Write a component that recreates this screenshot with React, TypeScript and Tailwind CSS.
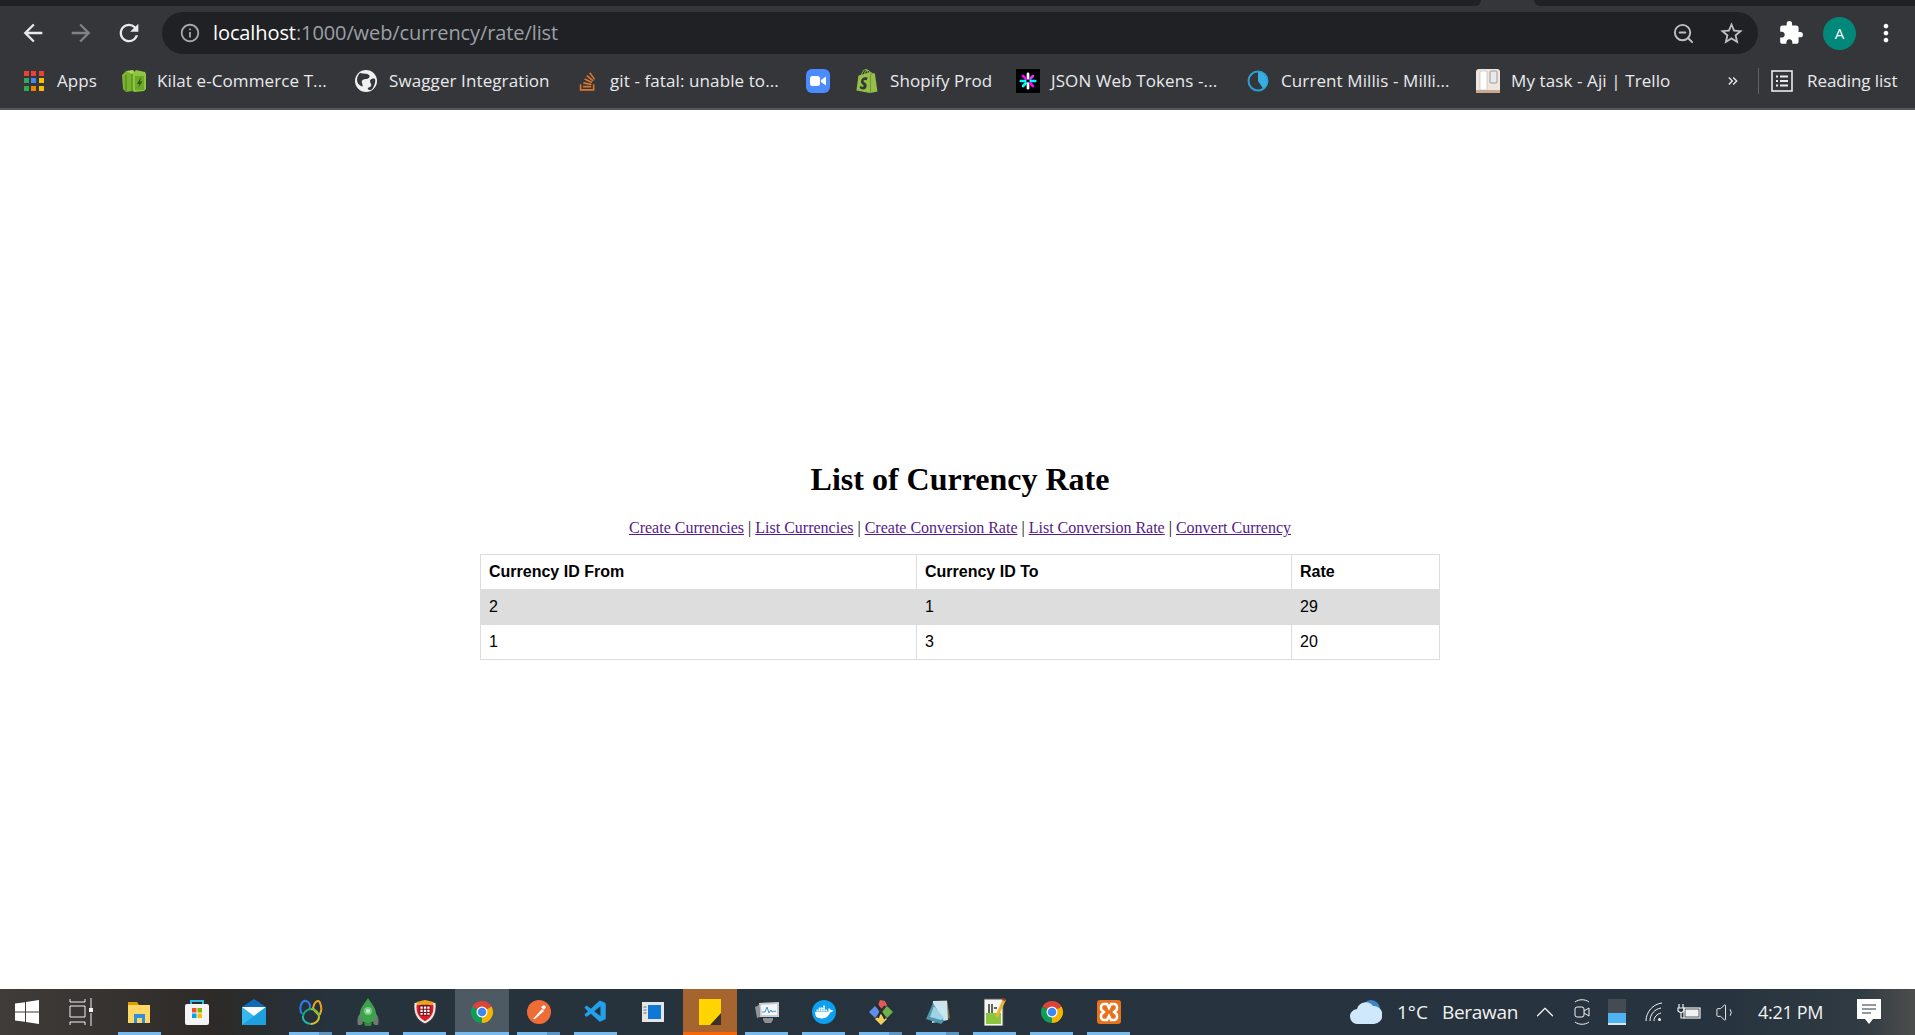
import type { ReactNode } from "react";
import {
  MdArrowBack,
  MdArrowForward,
  MdRefresh,
  MdInfoOutline,
  MdExtension,
  MdMoreVert,
  MdOutlineStarBorder,
  MdOutlineKeyboardDoubleArrowRight,
} from "react-icons/md";
import { LuZoomOut, LuChevronUp, LuVolume1 } from "react-icons/lu";
import { FaStackOverflow } from "react-icons/fa";
import { SiShopify, SiDocker } from "react-icons/si";
import { VscVscode } from "react-icons/vsc";

const AppsIcon = () => {
  const colors = ["#ea4335", "#ea4335", "#ea4335", "#34a853", "#4285f4", "#fbbc04", "#34a853", "#ea8600", "#fbbc04"];
  return (
    <div className="grid h-[20px] w-[20px] grid-cols-3 gap-[2px]">
      {colors.map((c, i) => (
        <svg key={i} viewBox="0 0 5 5" className="h-[5px] w-[5px]">
          <rect width="5" height="5" fill={c} />
        </svg>
      ))}
    </div>
  );
};

const KilatIcon = () => (
  <svg viewBox="0 0 24 24" className="h-[24px] w-[24px]">
    <path d="M0 6l4-4 6 1v19l-6 1-3-3z" fill="#7ab32e" />
    <path d="M4 2l7-1 2 3-3 1z" fill="#a8d75a" />
    <path d="M10 5l4-4 9 2 1 2v15l-2 2-10 1-2-2z" fill="#8cc63f" />
    <path d="M13 7h9v14h-9z" fill="#6ea82a" />
    <path d="M4 6v16M10 5v18" stroke="#4c7d17" strokeWidth="1" />
    <path d="M19 8l-4 7h2.500l-1.500 4 4.500-6.500h-2.500z" fill="#2c5a0c" />
  </svg>
);

const SwaggerIcon = () => (
  <svg viewBox="0 0 22 22" className="h-[22px] w-[22px]">
    <circle cx="11" cy="11" r="11" fill="#f1f1f1" />
    <path d="M5 3c3 1 7 0 9 2s-1 4-3 4-5 1-4 4 1 4-1 3-4-3-4-6 1-5 3-7zM20 9c-2-1-5 0-5 2s2 3 1 5-4 1-3 3 4 1 5-1 3-6 2-9z" fill="#35363a" />
  </svg>
);

const ZoomIcon = () => (
  <div className="flex h-[24px] w-[24px] items-center justify-center rounded-[6px] bg-[#4a8cff]">
    <svg viewBox="0 0 16 10" className="w-[16px]">
      <rect width="10" height="10" rx="2.500" fill="#fff" />
      <path d="M11 4l5-3.500v9L11 6z" fill="#fff" />
    </svg>
  </div>
);

const JwtIcon = () => (
  <div className="flex h-[24px] w-[24px] items-center justify-center bg-black">
    <svg viewBox="0 0 20 20" className="h-[18px] w-[18px]" strokeWidth="3" strokeLinecap="round">
      <path d="M10 2v5" stroke="#fff" />
      <path d="M10 13v5" stroke="#fff" />
      <path d="M4.500 4.500l3 3" stroke="#f0f" />
      <path d="M12.500 12.500l3 3" stroke="#f0f" />
      <path d="M15.500 4.500l-3 3" stroke="#d63aff" />
      <path d="M7.500 12.500l-3 3" stroke="#0ff" />
      <path d="M2 10h5" stroke="#0ff" />
      <path d="M13 10h5" stroke="#0ff" />
    </svg>
  </div>
);

const MillisIcon = () => (
  <svg viewBox="0 0 22 22" className="h-[22px] w-[22px]">
    <circle cx="11" cy="11" r="9.500" fill="none" stroke="#2a9fd6" strokeWidth="2" />
    <path d="M11 2a9 9 0 0 1 5 16.500L11 11z" fill="#36b0e3" />
  </svg>
);

const TrelloIcon = () => (
  <svg viewBox="0 0 24 24" className="h-[24px] w-[24px]">
    <rect width="24" height="24" rx="3" fill="#efe6df" />
    <rect x="4" y="2" width="7" height="19" rx="1" fill="#fff" stroke="#aaa" strokeWidth="0.500" />
    <rect x="14" y="2" width="7" height="12" rx="1" fill="#e9e9e9" stroke="#888" strokeWidth="0.800" />
    <path d="M0 21h24v3H0z" fill="#c9a992" />
  </svg>
);

const ReadingIcon = () => (
  <svg viewBox="0 0 22 22" className="h-[22px] w-[22px]" fill="none" stroke="#e8eaed" strokeWidth="1.600">
    <rect x="1" y="1" width="20" height="20" />
    <path d="M5 6.500h2M9 6.500h8M5 11h2M9 11h8M5 15.500h2M9 15.500h8" strokeWidth="2" />
  </svg>
);

const ChromeLogo = () => (
  <svg viewBox="0 0 24 24" className="h-[24px] w-[24px]">
    <path d="M12 12L2.470 6.500A11 11 0 0 1 21.530 6.500z" fill="#db4437" />
    <path d="M12 12L12 23A11 11 0 0 1 2.470 6.500z" fill="#0f9d58" />
    <path d="M12 12L21.530 6.500A11 11 0 0 1 12 23z" fill="#f4b400" />
    <circle cx="12" cy="12" r="5.500" fill="#fff" />
    <circle cx="12" cy="12" r="4.300" fill="#4285f4" />
  </svg>
);

const WindowsLogo = () => (
  <svg viewBox="0 0 24 24" className="h-[24px] w-[24px]" fill="#fff">
    <path d="M0 3.500l10-1.300v9.200H0zM11 2l13-2v11.400H11zM0 12.600h10v9.200L0 20.500zM11 12.600h13V24l-13-2z" />
  </svg>
);

const TaskView = () => (
  <svg viewBox="0 0 24 28" className="h-[28px] w-[24px]" fill="none" stroke="#f2f2f2" strokeWidth="1">
    <path d="M1 1v3h15V1M1 8h15v11H1zM1 27v-3h15v3M22 0v10M22 15v13" />
    <rect x="20.500" y="10.500" width="3" height="3" fill="#fff" />
  </svg>
);

const FolderIcon = () => (
  <svg viewBox="0 0 24 24" className="h-[24px] w-[24px]">
    <path d="M0 2h9l2 3h-11z" fill="#e0a100" />
    <path d="M0 5h22v18H0z" fill="#ffd766" />
    <path d="M6 14h11v9h-3v-5H9v5H6z" fill="#2f90d9" />
  </svg>
);

const StoreIcon = () => (
  <svg viewBox="0 0 24 26" className="h-[26px] w-[24px]">
    <path d="M6 6V2h12v4" fill="none" stroke="#2bb8ea" strokeWidth="2" />
    <rect y="5" width="24" height="21" rx="2" fill="#f4f4f4" />
    <path d="M7 9h4.500v4.500H7z" fill="#f25022" />
    <path d="M12.500 9H17v4.500h-4.500z" fill="#7fba00" />
    <path d="M7 14.500h4.500V19H7z" fill="#00a4ef" />
    <path d="M12.500 14.500H17V19h-4.500z" fill="#ffb900" />
  </svg>
);

const MailIcon = () => (
  <svg viewBox="0 0 24 26" className="h-[26px] w-[24px]">
    <path d="M12 0l12 8H0z" fill="#0f6cbd" />
    <path d="M0 8h24v18H0z" fill="#35b8f2" />
    <path d="M0 8l12 9 12-9z" fill="#fff" />
    <path d="M0 26l24-18v18z" fill="#1d9fe0" />
  </svg>
);

const NavicatIcon = () => (
  <svg viewBox="0 0 24 26" className="h-[26px] w-[24px]" fill="none" strokeWidth="2">
    <path d="M3 15C-1 9 3 1 7 2s5 5 3 9" stroke="#2f7be8" />
    <path d="M14 9c1-4 3-7 5-7s5 8 2 13c-1 2-4-1-7-6z" stroke="#f2a51a" />
    <path d="M4 17a8.500 8 0 0 1 8-7" stroke="#19a974" />
    <path d="M12 10a8.500 8 0 0 1 8 8" stroke="#7cc142" />
    <path d="M20 18a8.500 7 0 0 1-8 7" stroke="#d9c22e" />
    <path d="M12 25a8.500 7 0 0 1-8-8" stroke="#22b8a6" />
  </svg>
);

const RocketIcon = () => (
  <svg viewBox="0 0 24 28" className="h-[28px] w-[24px]">
    <path d="M5 15c-4 3-4 8-3 12h3l2-2zM19 15c4 3 4 8 3 12h-3l-2-2z" fill="#6f7a72" />
    <path d="M12 0c2 4 8 9 8 16 0 6-3 9-8 9s-8-3-8-9c0-7 6-12 8-16z" fill="#3da34a" />
    <circle cx="12" cy="13" r="4" fill="#7dc98a" />
    <circle cx="12" cy="13" r="2" fill="#c7ead0" />
    <path d="M8 25h8l-1 3H9z" fill="#2f8a3a" />
  </svg>
);

const ShieldIcon = () => (
  <svg viewBox="0 0 24 28" className="h-[28px] w-[22px]">
    <path d="M0 4l12-3 12 3c1 12-3 19-12 23C3 23-1 16 0 4z" fill="#e8e8e8" stroke="#333" strokeWidth="1" />
    <path d="M3 6h18c1 9-2 14-9 18C5 20 2 15 3 6z" fill="#e01b24" />
    <path d="M3 3l9-2 9 2v3H3z" fill="#f2a11d" />
    <rect x="6" y="6" width="12" height="12" rx="2" fill="#7a0f14" />
    <path d="M7 8h2.500v2.500H7zM10.800 8h2.500v2.500h-2.500zM14.500 8H17v2.500h-2.500zM7 11.500h2.500V14H7zM10.800 11.500h2.500V14h-2.500zM14.500 11.500H17V14h-2.500zM7 15h2.500v2H7zM10.800 15h2.500v2h-2.500zM14.500 15H17v2h-2.500z" fill="#fff" />
  </svg>
);

const PostmanIcon = () => (
  <svg viewBox="0 0 24 24" className="h-[24px] w-[24px]">
    <circle cx="12" cy="12" r="12" fill="#ef6c37" />
    <path d="M6 19l9-10 2 2-9 8z" fill="#fff" />
    <path d="M14 7l3-2 2 2-2 3z" fill="#fff" />
  </svg>
);

const WindowAppIcon = () => (
  <svg viewBox="0 0 22 20" className="h-[20px] w-[22px]">
    <rect width="22" height="20" fill="#e6e6e6" />
    <rect x="6" y="3" width="13" height="14" fill="#0d78d6" />
    <path d="M1.500 5h3M1.500 8h3M1.500 11h3" stroke="#666" />
  </svg>
);

const StickyIcon = () => (
  <svg viewBox="0 0 22 26" className="h-[26px] w-[22px]">
    <path d="M0 0h22v16l-10 10H0z" fill="#ffd400" />
    <path d="M22 14v12H11z" fill="#3a3328" />
  </svg>
);

const MonitorIcon = () => (
  <svg viewBox="0 0 24 24" className="h-[24px] w-[24px]">
    <path d="M0 7l4-2 1 12-3 1z" fill="#8f9598" />
    <path d="M4 3l20-1v15H5z" fill="#c9cdcf" />
    <path d="M6 5l16-1v11H7z" fill="#f4f6f7" />
    <path d="M7 12l3 0 2-5 2 6 2-3 1 2 4-1" stroke="#3f93dc" fill="none" />
    <path d="M8 18h10v2l-2 3h-6l-2-3z" fill="#8b9093" />
  </svg>
);

const DockerIcon = () => (
  <div className="flex h-[24px] w-[24px] items-center justify-center rounded-full bg-[#0d9ff0]">
    <SiDocker className="text-[18px] text-white" />
  </div>
);

const GitIcon = () => (
  <svg viewBox="0 0 24 26" className="h-[26px] w-[24px]">
    <path d="M11 1l5 1 2 4-4 5-5-5z" fill="#e2595b" />
    <path d="M6 7l5 6-5 6-6-6z" fill="#5f8fe8" />
    <path d="M18 7l6 6-6 6-5-6z" fill="#6fb04a" />
    <path d="M12 15l6 5-6 6-6-6z" fill="#f0d060" />
    <path d="M8 5l8 15M16 7l-5 6-2 6" stroke="#2a2a2a" strokeWidth="1.800" fill="none" />
  </svg>
);

const NotepadIcon = () => (
  <svg viewBox="0 0 24 24" className="h-[24px] w-[24px]">
    <path d="M7 1l14-1 3 18-2 1z" fill="#8a6a3a" />
    <path d="M7 1l14 0 1 19-16 3z" fill="#c7e6ef" />
    <path d="M7 3L0 19l15 5 3-3z" fill="#4f95ad" />
    <path d="M8 6L4 17l11 3 3-2z" fill="#9fd3e4" />
  </svg>
);

const NotepadPPIcon = () => (
  <svg viewBox="0 0 22 28" className="h-[28px] w-[22px]">
    <rect x="0" y="1" width="19" height="27" fill="#f4f4f0" stroke="#555" strokeWidth="1" />
    <path d="M2 15h15v11H2z" fill="#8cc63f" />
    <path d="M5 6v9M8 6v9M10 10h3" stroke="#333" strokeWidth="1.500" />
    <path d="M19 1l3 1-8 17-3-1z" fill="#e8b730" />
    <path d="M19 0l3 1-1 2-3-1z" fill="#a33" />
  </svg>
);

const XamppIcon = () => (
  <div className="flex h-[24px] w-[24px] items-center justify-center rounded-[3px] bg-[#e8721c]">
    <svg viewBox="0 0 20 20" className="h-[20px] w-[20px]" fill="none" stroke="#fff" strokeWidth="2.500">
      <path d="M5 2h3l2 4 2-4h3a3 3 0 0 1 3 3v1a3 3 0 0 1-2 3l-1 1 1 1a3 3 0 0 1 2 3v1a3 3 0 0 1-3 3h-3l-2-4-2 4H5a3 3 0 0 1-3-3v-1a3 3 0 0 1 2-3l1-1-1-1a3 3 0 0 1-2-3V5a3 3 0 0 1 3-3z" />
    </svg>
  </div>
);

const bookmarks: { icon: ReactNode; label: string; slot: string; textW: string }[] = [
  { icon: <AppsIcon />, label: "Apps", slot: "w-[100px]", textW: "w-[42px]" },
  { icon: <KilatIcon />, label: "Kilat e-Commerce T...", slot: "w-[232px]", textW: "w-[170px]" },
  { icon: <SwaggerIcon />, label: "Swagger Integration", slot: "w-[221px]", textW: "w-[162px]" },
  { icon: <FaStackOverflow className="text-[21px] text-[#d9772a]" />, label: "git - fatal: unable to...", slot: "w-[231px]", textW: "w-[171px]" },
  { icon: <ZoomIcon />, label: "", slot: "w-[49px]", textW: "w-0" },
  { icon: <SiShopify className="text-[24px] text-[#95bf47]" />, label: "Shopify Prod", slot: "w-[161px]", textW: "w-[103px]" },
  { icon: <JwtIcon />, label: "JSON Web Tokens -...", slot: "w-[230px]", textW: "w-[170px]" },
  { icon: <MillisIcon />, label: "Current Millis - Milli...", slot: "w-[230px]", textW: "w-[171px]" },
  { icon: <TrelloIcon />, label: "My task - Aji | Trello", slot: "w-[250px]", textW: "w-[156px]" },
];

const apps: { icon: ReactNode; running: boolean; split?: boolean; state?: "active" | "flash" }[] = [
  { icon: <FolderIcon />, running: true },
  { icon: <StoreIcon />, running: false },
  { icon: <MailIcon />, running: false },
  { icon: <NavicatIcon />, running: true, split: true },
  { icon: <RocketIcon />, running: true },
  { icon: <ShieldIcon />, running: true },
  { icon: <ChromeLogo />, running: true, state: "active" },
  { icon: <PostmanIcon />, running: true, split: true },
  { icon: <VscVscode className="text-[26px] text-[#23a0ea]" />, running: true },
  { icon: <WindowAppIcon />, running: false },
  { icon: <StickyIcon />, running: true, state: "flash" },
  { icon: <MonitorIcon />, running: true },
  { icon: <DockerIcon />, running: true },
  { icon: <GitIcon />, running: true, split: true },
  { icon: <NotepadIcon />, running: true, split: true },
  { icon: <NotepadPPIcon />, running: true },
  { icon: <ChromeLogo />, running: true },
  { icon: <XamppIcon />, running: true },
];

const links = ["Create Currencies", "List Currencies", "Create Conversion Rate", "List Conversion Rate", "Convert Currency"];

const rows = [
  ["2", "1", "29"],
  ["1", "3", "20"],
];

const ChromeBar = () => (
  <div className="h-[110px] shrink-0 bg-[#35363a] font-['Open_Sans',sans-serif] text-[#e8eaed]">
    {/* tab strip */}
    <div className="flex h-[6px]">
      <div className="w-[1481px] rounded-br-[6px] bg-[#202124]" />
      <div className="w-[53px]" />
      <div className="flex-1 rounded-bl-[6px] bg-[#202124]" />
    </div>
    {/* toolbar */}
    <div className="flex h-[48px] items-end">
      <div className="flex h-[42px] w-[162px] items-center text-[28px]">
        <MdArrowBack className="ml-[19px] text-[#e8eaed]" />
        <MdArrowForward className="ml-[20px] text-[#808285]" />
        <MdRefresh className="ml-[20px] text-[#e8eaed]" />
      </div>
      <div className="flex h-[42px] w-[1596px] items-center rounded-full bg-[#202124]">
        <MdInfoOutline className="ml-[17px] text-[22px] text-[#a5a7aa]" />
        <div className="ml-[12px] text-[20px] tracking-[-0.1px]">
          <span className="text-white">localhost</span>
          <span className="text-[#9aa0a6]">:1000/web/currency/rate/list</span>
        </div>
        <LuZoomOut className="ml-auto mr-[1px] text-[23px] text-[#bdc1c6]" />
        <MdOutlineStarBorder className="ml-[22px] mr-[13px] text-[27px] text-[#bdc1c6]" />
      </div>
      <div className="flex h-[42px] flex-1 items-center">
        <MdExtension className="ml-[20px] text-[26px] text-white" />
        <div className="ml-[19px] flex h-[33px] w-[33px] items-center justify-center rounded-full bg-[#00897b] text-[15px] text-white">A</div>
        <MdMoreVert className="ml-[16px] text-[28px] text-white" />
      </div>
    </div>
    {/* bookmarks */}
    <div className="flex h-[56px] items-center border-b-[2px] border-[#56575a] pl-[22px] text-[17px] tracking-[0.1px]">
      {bookmarks.map((b) => (
        <div key={b.label || "zoom"} className={`flex items-center ${b.slot}`}>
          <div className="flex w-[24px] justify-center">{b.icon}</div>
          {b.label && <div className={`ml-[11px] whitespace-nowrap ${b.textW}`}>{b.label}</div>}
        </div>
      ))}
      <MdOutlineKeyboardDoubleArrowRight className="-ml-[1px] text-[16px] text-[#e8eaed]" />
      <div className="ml-[17px] h-[26px] w-px bg-[#5f6368]" />
      <div className="ml-[12px] flex items-center">
        <ReadingIcon />
        <div className="ml-[14px] whitespace-nowrap tracking-[-0.05px]">Reading list</div>
      </div>
    </div>
  </div>
);

const Page = () => (
  <div className="flex-1 bg-white pl-[5px] pt-[351px] text-black">
    <h1 className="text-center font-['Liberation_Serif',serif] text-[32px] leading-[37px] font-bold">List of Currency Rate</h1>
    <div className="mt-[21px] text-center font-['Liberation_Serif',serif] text-[16px] leading-[18px]">
      {links.map((l, i) => (
        <span key={l}>
          {i > 0 && " | "}
          <a className="text-[#551a8b] underline">{l}</a>
        </span>
      ))}
    </div>
    <table className="mx-auto mt-[17px] w-[959px] table-fixed border-collapse font-['Liberation_Sans',sans-serif] text-[16px] leading-[18px]">
      <colgroup>
        <col className="w-[436px]" />
        <col className="w-[375px]" />
        <col className="w-[148px]" />
      </colgroup>
      <thead>
        <tr>
          {["Currency ID From", "Currency ID To", "Rate"].map((h) => (
            <th key={h} className="h-[35px] border border-[#dddddd] px-[8px] text-left font-bold">
              {h}
            </th>
          ))}
        </tr>
      </thead>
      <tbody>
        {rows.map((r, i) => (
          <tr key={i} className={i === 0 ? "bg-[#dddddd]" : ""}>
            {r.map((c, j) => (
              <td key={j} className="h-[35px] border border-[#dddddd] px-[8px]">
                {c}
              </td>
            ))}
          </tr>
        ))}
      </tbody>
    </table>
  </div>
);

const Taskbar = () => (
  <div className="flex h-[46px] shrink-0 items-stretch bg-[linear-gradient(90deg,#403c3a_0%,#2d2a27_11%,#26323c_17%,#27333e_90%,#2f3a42_97%,#4d4d4c_100%)] font-['Open_Sans',sans-serif] text-[#f2f2f2]">
    <div className="flex w-[54px] items-center justify-center">
      <WindowsLogo />
    </div>
    <div className="flex w-[54px] items-center justify-center">
      <TaskView />
    </div>
    <div className="ml-[5px] flex gap-[3px]">
      {apps.map((a, i) => (
        <div
          key={i}
          className={`relative flex w-[54px] items-center justify-center ${
            a.state === "active" ? "bg-[#4d5a64]" : a.state === "flash" ? "bg-[#a6642f]" : ""
          }`}
        >
          {a.icon}
          {a.running && (
            <div
              className={`absolute bottom-0 flex h-[3px] ${
                a.state === "active" ? "left-0 w-[54px] bg-[#76b9ed]" : a.state === "flash" ? "left-0 w-[54px] bg-[#f76707]" : "left-[5px] w-[43px] bg-[#76b9ed]"
              }`}
            >
              {a.split && <div className="ml-[30px] h-[3px] w-[13px] bg-[#5b93c1]" />}
            </div>
          )}
        </div>
      ))}
    </div>
    <div className="ml-[214px] flex items-center">
      <svg viewBox="0 0 32 24" className="h-[24px] w-[32px]">
        <circle cx="21" cy="9" r="9" fill="#3f84c8" />
        <circle cx="25" cy="15" r="7" fill="#3f84c8" />
        <path d="M8 24a7.500 7.500 0 0 1-1-15 9 9 0 0 1 16-3 7.500 7.500 0 0 1 1 18z" fill="#cfe8fb" />
      </svg>
      <div className="ml-[15px] w-[45px] whitespace-nowrap text-[19px]">1°C</div>
      <div className="w-[88px] whitespace-nowrap text-[19px] tracking-[-0.3px]">Berawan</div>
      <LuChevronUp className="text-[30px]" strokeWidth={1} />
      <svg viewBox="0 0 16 28" className="ml-[14px] h-[28px] w-[16px]" fill="none" stroke="#f2f2f2" strokeWidth="1">
        <path d="M1 4c4-3 10-3 14 0M1 24c4 3 10 3 14 0" />
        <rect x="1" y="9" width="9" height="10" rx="2" />
        <path d="M10 13l5-3v8l-5-3" />
      </svg>
      <svg viewBox="0 0 18 26" className="ml-[18px] h-[26px] w-[18px]">
        <rect width="18" height="26" fill="#444b52" />
        <rect y="14" width="18" height="10" fill="#4eb3f2" />
        <rect y="24" width="18" height="2" fill="#dfe6ea" />
      </svg>
      <svg viewBox="0 0 18 20" className="ml-[19px] h-[20px] w-[18px]" fill="none" stroke="#f2f2f2" strokeWidth="1">
        <path d="M1 19C1 10 8 2 17 1M5 19c0-7 5-12 11-13M9 19c0-4 3-7 7-8" />
        <circle cx="14.500" cy="17.500" r="1.500" fill="#f2f2f2" stroke="none" />
      </svg>
      <svg viewBox="0 0 24 18" className="ml-[14px] h-[18px] w-[24px]" fill="none" stroke="#f2f2f2" strokeWidth="1.200">
        <path d="M2 1v4M6 1v4M1 5h6v3l-3 2-3-2zM4 10v5h3" />
        <rect x="7" y="5" width="16" height="10" />
        <rect x="9" y="7" width="12" height="6" fill="#f2f2f2" />
      </svg>
      <LuVolume1 className="ml-[14px] text-[23px]" strokeWidth={1} />
      <div className="ml-[20px] w-[66px] whitespace-nowrap text-[18px] tracking-[-0.3px]">4:21 PM</div>
      <svg viewBox="0 0 24 26" className="ml-[33px] h-[26px] w-[24px]">
        <path d="M0 0h24v20h-8l-4 5-4-5H0z" fill="#fff" />
        <path d="M5 6h14M5 10h14M5 14h9" stroke="#27333e" strokeWidth="1" />
      </svg>
    </div>
  </div>
);

export default function App() {
  return (
    <div className="flex h-screen w-full flex-col overflow-hidden">
      <ChromeBar />
      <Page />
      <Taskbar />
    </div>
  );
}
